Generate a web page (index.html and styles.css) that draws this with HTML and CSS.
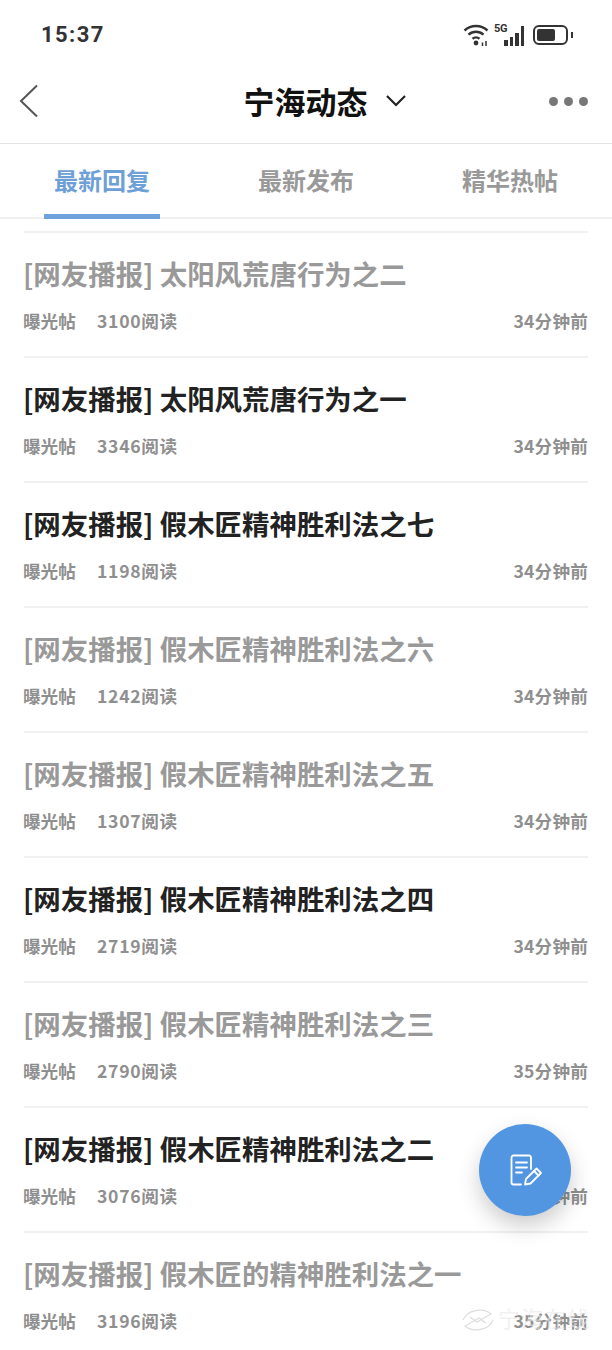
FILE: index.html
```html
<!DOCTYPE html>
<html lang="zh">
<head>
<meta charset="utf-8">
<title>宁海动态</title>
<link rel="stylesheet" href="styles.css">
</head>
<body>
<div class="phone">
  <div class="status">
    <span class="time">15:37</span>
    <div class="status-icons">
      <svg class="wifi" width="28" height="24" viewBox="0 0 28 24" fill="none" stroke="#333" stroke-width="2.4">
        <path d="M1.500 7.500C8 1.500 18 1.500 24.500 7.500"/><path d="M5.500 11.700C9.800 7.800 16.200 7.800 20.500 11.700"/><path d="M9.500 15.800C11.700 14 14.300 14 16.500 15.800"/>
        <circle cx="13" cy="20" r="2.400" fill="#333" stroke="none"/>
        <path d="M19.500 19.500v3.500M23 18v5" stroke-width="1.500"/>
      </svg>
      <div class="net">
        <span class="five-g">5G</span>
        <div class="bars"><i class="b1"></i><i class="b2"></i><i class="b3"></i><i class="b4"></i></div>
      </div>
      <div class="battery"><div class="level"></div></div>
      <div class="cap"></div>
    </div>
  </div>
  <header class="nav">
    <svg class="back" width="20" height="34" viewBox="0 0 20 34" fill="none" stroke="#555" stroke-width="2"><path d="M18 1.500 2 17l16 15.500"/></svg>
    <div class="nav-title">
      <span>宁海动态</span>
      <svg width="22" height="14" viewBox="0 0 22 14" fill="none" stroke="#222" stroke-width="2.200"><path d="M2 2l9 9 9-9"/></svg>
    </div>
    <div class="dots"><i></i><i></i><i></i></div>
  </header>
  <nav class="tabs">
    <div class="tab active"><span>最新回复</span></div>
    <div class="tab"><span>最新发布</span></div>
    <div class="tab"><span>精华热帖</span></div>
  </nav>
  <main class="list">
    <article class="row read"><h2>[网友播报] 太阳风荒唐行为之二</h2><div class="meta"><span class="tag">曝光帖</span><span class="count">3100阅读</span><span class="ago">34分钟前</span></div></article>
    <article class="row"><h2>[网友播报] 太阳风荒唐行为之一</h2><div class="meta"><span class="tag">曝光帖</span><span class="count">3346阅读</span><span class="ago">34分钟前</span></div></article>
    <article class="row"><h2>[网友播报] 假木匠精神胜利法之七</h2><div class="meta"><span class="tag">曝光帖</span><span class="count">1198阅读</span><span class="ago">34分钟前</span></div></article>
    <article class="row read"><h2>[网友播报] 假木匠精神胜利法之六</h2><div class="meta"><span class="tag">曝光帖</span><span class="count">1242阅读</span><span class="ago">34分钟前</span></div></article>
    <article class="row read"><h2>[网友播报] 假木匠精神胜利法之五</h2><div class="meta"><span class="tag">曝光帖</span><span class="count">1307阅读</span><span class="ago">34分钟前</span></div></article>
    <article class="row"><h2>[网友播报] 假木匠精神胜利法之四</h2><div class="meta"><span class="tag">曝光帖</span><span class="count">2719阅读</span><span class="ago">34分钟前</span></div></article>
    <article class="row read"><h2>[网友播报] 假木匠精神胜利法之三</h2><div class="meta"><span class="tag">曝光帖</span><span class="count">2790阅读</span><span class="ago">35分钟前</span></div></article>
    <article class="row"><h2>[网友播报] 假木匠精神胜利法之二</h2><div class="meta"><span class="tag">曝光帖</span><span class="count">3076阅读</span><span class="ago">35分钟前</span></div></article>
    <article class="row read"><h2>[网友播报] 假木匠的精神胜利法之一</h2><div class="meta"><span class="tag">曝光帖</span><span class="count">3196阅读</span><span class="ago">35分钟前</span></div></article>
  </main>
  <button class="fab" aria-label="发帖">
    <svg width="36" height="36" viewBox="0 0 36 36" fill="none" stroke="#fff" stroke-width="1.800" stroke-linecap="round" stroke-linejoin="round">
      <path d="M24 17V5.500a2 2 0 0 0-2-2H6.500a2 2 0 0 0-2 2v25a2 2 0 0 0 2 2H14"/>
      <path d="M9 10.500h11M9 15.500h11M9 20.500h6"/>
      <path d="M18 32.500l1-5.500 10.500-10.500 4.500 4.500L23.500 31.500z"/>
      <path d="M27 19l4.500 4.500"/>
    </svg>
  </button>
  <svg class="mark" width="34" height="28" viewBox="0 0 34 28" fill="none" stroke="#ddd" stroke-width="1.200"><path d="M2 14C6 4 22 1 30 8L16 16 9 11"/><path d="M32 14C28 24 12 27 4 20l14-8 7 5"/></svg>
  <span class="mark-text">宁海在线</span>
</div>
</body>
</html>
```

FILE: styles.css
```css
* { box-sizing: border-box; }
html, body { margin: 0; padding: 0; }
body { background: #fff; font-family: "Noto Sans CJK SC", "Noto Sans", "Liberation Sans", sans-serif; }
.phone { position: relative; width: 612px; height: 1350px; overflow: hidden; background: #fff; }

.status { height: 70px; padding: 12px 39px 0 41px; display: flex; justify-content: space-between; align-items: flex-start; }
.time { font: 700 22px/46px "Roboto", "Liberation Sans", sans-serif; letter-spacing: 1.400px; color: #333; }
.status-icons { display: flex; align-items: center; height: 46px; }
.wifi { margin-right: 3px; }
.net { position: relative; width: 30px; height: 22px; margin-right: 9px; }
.five-g { position: absolute; left: 0; top: -1px; font: 700 11px/12px "Roboto", sans-serif; letter-spacing: -.3px; color: #333; }
.bars { position: absolute; right: 0; bottom: 0; display: flex; align-items: flex-end; gap: 2px; }
.bars i { display: block; width: 3.500px; background: #333; }
.b1 { height: 6px; } .b2 { height: 9px; } .b3 { height: 13px; } .b4 { height: 20px; }
.battery { width: 35px; height: 20px; border: 2px solid #333; border-radius: 6px; padding: 2px; }
.level { width: 18px; height: 12px; background: #333; border-radius: 2px; }
.cap { width: 2px; height: 6px; margin-left: 3px; background: #333; }

.nav { height: 74px; display: flex; align-items: center; justify-content: space-between; padding: 0 24px 11px 19px; border-bottom: 1px solid #e4e4e4; }
.back { flex: none; }
.nav-title { display: flex; align-items: center; gap: 17px; margin-left: 62px; font-size: 31px; line-height: 40px; font-weight: 700; color: #111; }
.dots { display: flex; gap: 6px; }
.dots i { display: block; width: 9px; height: 9px; border-radius: 50%; background: #777; }

.tabs { display: flex; height: 75px; border-bottom: 2px solid #efefef; }
.tab { flex: 1 1 0; display: flex; justify-content: center; }
.tab span { width: 116px; height: 75px; text-align: center; font-size: 24px; line-height: 72px; font-weight: 700; color: #999; }
.tab.active span { color: #6ea0d8; border-bottom: 5px solid #6fa2dc; }

.list { margin: 12px 24px 0; border-top: 2px solid #f1f1f1; }
.row { height: 125px; border-bottom: 2px solid #f1f1f1; padding-top: 19px; }
.row h2 { margin: 0 0 0 -1px; font-size: 27.450px; line-height: 42px; font-weight: 700; color: #222; white-space: nowrap; }
.row.read h2 { color: #999; }
.meta { display: flex; margin: 14px 0 0 -1px; font-size: 17.600px; line-height: 26px; font-weight: 700; color: #8f8f8f; }
.tag { width: 74px; }
.count { letter-spacing: .7px; }
.ago { margin-left: auto; letter-spacing: .2px; }

.fab { position: absolute; left: 479px; top: 1124px; width: 92px; height: 92px; padding: 0; border: 0; border-radius: 50%; background: #5296e2; box-shadow: 0 10px 22px rgba(0,0,0,.2); display: flex; align-items: center; justify-content: center; }
.mark { position: absolute; left: 461px; top: 1306px; }
.mark-text { position: absolute; left: 498px; top: 1302px; font-size: 22px; line-height: 30px; letter-spacing: 1px; color: #e8e8e8; opacity: .6; }
```
